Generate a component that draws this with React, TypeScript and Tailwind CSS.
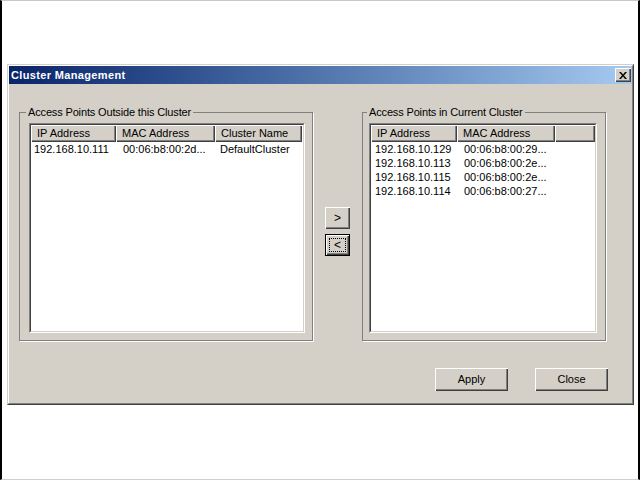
import React from "react";

const raised =
  "bg-[#d4d0c8] shadow-[inset_1px_1px_0_#ffffff,inset_-1px_-1px_0_#404040,inset_-2px_-2px_0_#808080]";

function HeaderCell({ w, children }: { w: number; children?: React.ReactNode }) {
  return (
    <div
      className={`${raised} h-[17px] shrink-0 flex items-center pl-[6px] leading-none whitespace-nowrap overflow-hidden`}
      style={{ width: w }}
    >
      {children}
    </div>
  );
}

function ListView({
  width,
  cols,
  rows,
}: {
  width: number;
  cols: { w: number; label: string; pad: number }[];
  rows: string[][];
}) {
  return (
    <div
      className="h-[210px] border border-t-[#808080] border-l-[#808080] border-b-white border-r-white"
      style={{ width }}
    >
      <div className="h-full w-full border border-t-[#404040] border-l-[#404040] border-b-[#d4d0c8] border-r-[#d4d0c8] bg-white flex flex-col overflow-hidden">
        <div className="flex">
          {cols.map((c, i) => (
            <HeaderCell key={i} w={c.w}>
              {c.label}
            </HeaderCell>
          ))}
        </div>
        <div className="flex flex-col">
          {rows.map((r, i) => (
            <div key={i} className="flex h-[14px] items-center leading-none">
              {r.map((v, j) => (
                <div
                  key={j}
                  className="shrink-0 whitespace-nowrap overflow-hidden"
                  style={{ width: cols[j].w, paddingLeft: cols[j].pad }}
                >
                  {v}
                </div>
              ))}
            </div>
          ))}
        </div>
      </div>
    </div>
  );
}

function Group({
  width,
  label,
  padL,
  padR,
  legendShift,
  children,
}: {
  width: number;
  label: string;
  padL: number;
  padR: number;
  legendShift: number;
  children: React.ReactNode;
}) {
  return (
    <fieldset
      className="border border-[#808080] shadow-[1px_1px_0_#ffffff] h-[235px] pb-[7px]"
      style={{ width, paddingLeft: padL, paddingRight: padR }}
    >
      <legend className="px-[2px] leading-[13px] tracking-[-0.15px]" style={{ marginLeft: legendShift }}>
        {label}
      </legend>
      <div className="pt-[4px]">{children}</div>
    </fieldset>
  );
}

export default function App() {
  return (
    <div
      className="w-[640px] h-[480px] bg-white border-l-2 border-r-2 border-black border-t border-b border-t-[#c8c8c8] border-b-[#d0d0d0] pt-[63px] pl-[5px] text-[11px] text-black"
      style={{ fontFamily: '"Liberation Sans", Arial, sans-serif' }}
    >
      <div className="w-[627px] border border-t-[#d4d0c8] border-l-[#d4d0c8] border-b-[#404040] border-r-[#404040]">
        <div className="border border-t-white border-l-white border-b-[#808080] border-r-[#808080] bg-[#d4d0c8]">
          {/* title bar */}
          <div className="h-[18px] flex items-center justify-between bg-gradient-to-r from-[#0a246a] to-[#a6caf0] pl-[2px] pr-[1px]">
            <span className="text-white font-bold text-[11px] leading-none tracking-[0.35px]">Cluster Management</span>
            <div className={`${raised} w-[16px] h-[14px] flex items-center justify-center`}>
              <svg width="8" height="7" viewBox="0 0 8 7">
                <path d="M0 0h2l2 2.5L6 0h2L5 3.5 8 7H6L4 4.5 2 7H0l3-3.5z" fill="#000" />
              </svg>
            </div>
          </div>
          {/* body */}
          <div className="pl-[10px] pt-[22px] pb-[12px]">
            <div className="flex">
              <Group width={294} label="Access Points Outside this Cluster" padL={9} padR={7} legendShift={-3}>
                <ListView
                  width={276}
                  cols={[
                    { w: 85, label: "IP Address", pad: 3 },
                    { w: 99, label: "MAC Address", pad: 7 },
                    { w: 87, label: "Cluster Name", pad: 5 },
                  ]}
                  rows={[["192.168.10.111", "00:06:b8:00:2d...", "DefaultCluster"]]}
                />
              </Group>
              <div className="w-[49px] flex flex-col items-center pt-[101px] gap-[5px]">
                <div className={`${raised} w-[25px] h-[22px] flex items-center justify-center text-[12px]`}>&gt;</div>
                <div className="w-[25px] h-[22px] border border-black">
                  <div className={`${raised} w-full h-full flex items-center justify-center p-[3px]`}>
                    <div className="w-full h-full border border-dotted border-black flex items-center justify-center text-[12px]">
                      &lt;
                    </div>
                  </div>
                </div>
              </div>
              <Group width={244} label="Access Points in Current Cluster" padL={6} padR={8} legendShift={-2}>
                <ListView
                  width={228}
                  cols={[
                    { w: 86, label: "IP Address", pad: 4 },
                    { w: 98, label: "MAC Address", pad: 7 },
                    { w: 40, label: "", pad: 5 },
                  ]}
                  rows={[
                    ["192.168.10.129", "00:06:b8:00:29...", ""],
                    ["192.168.10.113", "00:06:b8:00:2e...", ""],
                    ["192.168.10.115", "00:06:b8:00:2e...", ""],
                    ["192.168.10.114", "00:06:b8:00:27...", ""],
                  ]}
                />
              </Group>
            </div>
            <div className="flex justify-end gap-[27px] mt-[27px] pr-[24px]">
              <div className={`${raised} w-[73px] h-[23px] flex items-center justify-center`}>Apply</div>
              <div className={`${raised} w-[73px] h-[23px] flex items-center justify-center`}>Close</div>
            </div>
          </div>
        </div>
      </div>
    </div>
  );
}
